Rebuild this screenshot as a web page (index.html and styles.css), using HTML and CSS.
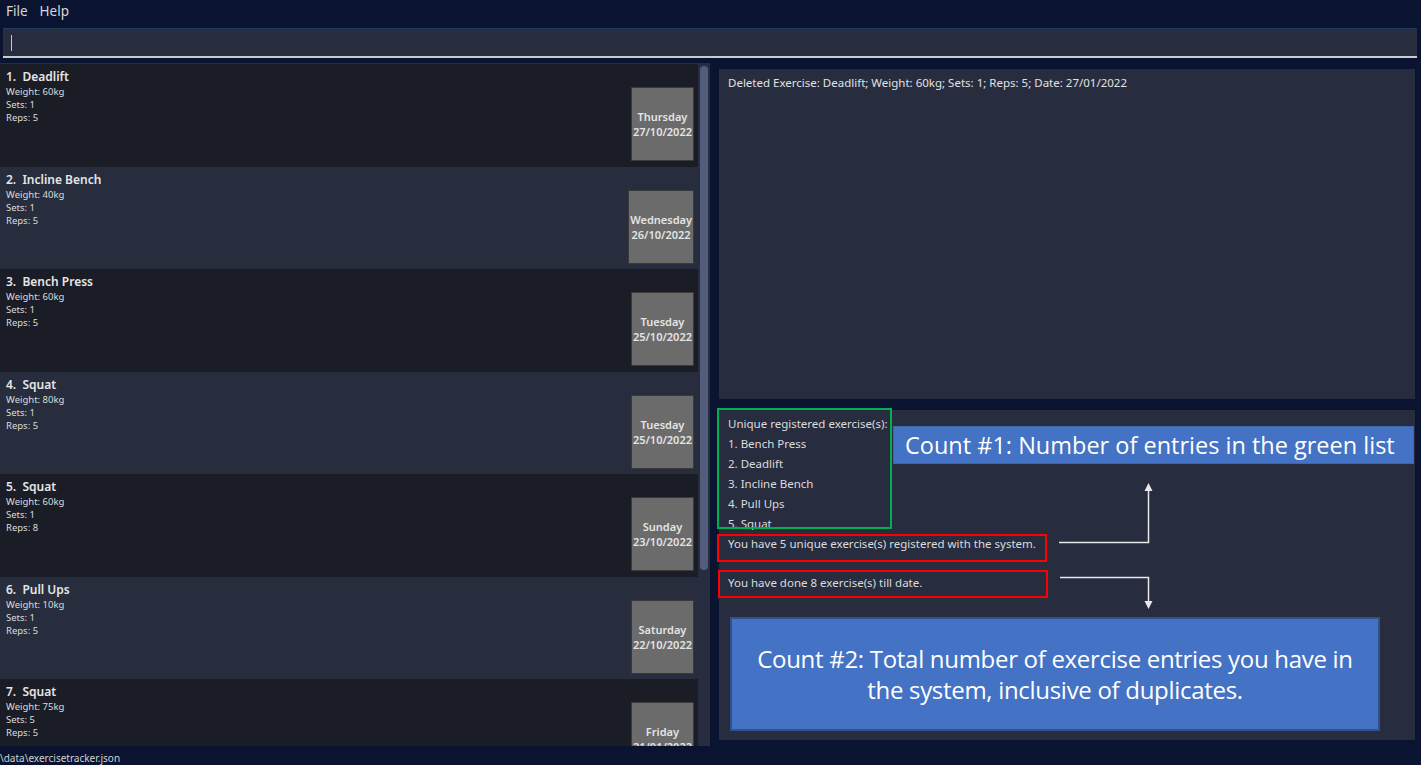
FILE: index.html
```html
<!DOCTYPE html>
<html>
<head>
<meta charset="utf-8">
<link rel="stylesheet" href="styles.css">
</head>
<body>
<div class="app">
  <div class="menubar"><span class="menu-item">File</span><span class="menu-item">Help</span></div>
  <div class="command"><span class="caret"></span></div>
  <div class="main">
    <div class="list-wrap">
      <div class="list">
        <div class="cell dark"><div class="info"><div class="title">1.&nbsp; Deadlift</div><div class="line">Weight: 60kg</div><div class="line">Sets: 1</div><div class="line">Reps: 5</div></div><div class="date"><span>Thursday</span><span>27/10/2022</span></div></div>
        <div class="cell light"><div class="info"><div class="title">2.&nbsp; Incline Bench</div><div class="line">Weight: 40kg</div><div class="line">Sets: 1</div><div class="line">Reps: 5</div></div><div class="date"><span>Wednesday</span><span>26/10/2022</span></div></div>
        <div class="cell dark"><div class="info"><div class="title">3.&nbsp; Bench Press</div><div class="line">Weight: 60kg</div><div class="line">Sets: 1</div><div class="line">Reps: 5</div></div><div class="date"><span>Tuesday</span><span>25/10/2022</span></div></div>
        <div class="cell light"><div class="info"><div class="title">4.&nbsp; Squat</div><div class="line">Weight: 80kg</div><div class="line">Sets: 1</div><div class="line">Reps: 5</div></div><div class="date"><span>Tuesday</span><span>25/10/2022</span></div></div>
        <div class="cell dark"><div class="info"><div class="title">5.&nbsp; Squat</div><div class="line">Weight: 60kg</div><div class="line">Sets: 1</div><div class="line">Reps: 8</div></div><div class="date"><span>Sunday</span><span>23/10/2022</span></div></div>
        <div class="cell light"><div class="info"><div class="title">6.&nbsp; Pull Ups</div><div class="line">Weight: 10kg</div><div class="line">Sets: 1</div><div class="line">Reps: 5</div></div><div class="date"><span>Saturday</span><span>22/10/2022</span></div></div>
        <div class="cell dark"><div class="info"><div class="title">7.&nbsp; Squat</div><div class="line">Weight: 75kg</div><div class="line">Sets: 5</div><div class="line">Reps: 5</div></div><div class="date"><span>Friday</span><span>21/01/2022</span></div></div>
      </div>
      <div class="scrollbar"><div class="thumb"></div></div>
    </div>
    <div class="right">
      <div class="result">Deleted Exercise: Deadlift; Weight: 60kg; Sets: 1; Reps: 5; Date: 27/01/2022</div>
      <div class="stats">
        <div class="unique">
          <div class="sline">Unique registered exercise(s):</div>
          <div class="sline">1. Bench Press</div>
          <div class="sline">2. Deadlift</div>
          <div class="sline">3. Incline Bench</div>
          <div class="sline">4. Pull Ups</div>
          <div class="sline">5. Squat</div>
        </div>
        <div class="sline count1">You have 5 unique exercise(s) registered with the system.</div>
        <div class="sline count2">You have done 8 exercise(s) till date.</div>
      </div>
    </div>
  </div>
  <div class="status">\data\exercisetracker.json</div>

  <div class="box green"></div>
  <div class="box red red1"></div>
  <div class="box red red2"></div>
  <div class="callout callout1">Count #1: Number of entries in the green list</div>
  <div class="callout callout2">Count #2: Total number of exercise entries you have in the system, inclusive of duplicates.</div>
  <svg class="arrows" width="1421" height="765" viewBox="0 0 1421 765">
    <polyline points="1059,542.5 1148.5,542.5 1148.5,490" fill="none" stroke="#e8e8e8" stroke-width="1.5"/>
    <polygon points="1148.5,483 1144.5,491 1152.5,491" fill="#e8e8e8"/>
    <polyline points="1060,577.5 1148.5,577.5 1148.5,602" fill="none" stroke="#e8e8e8" stroke-width="1.5"/>
    <polygon points="1148.5,609 1144.5,601 1152.5,601" fill="#e8e8e8"/>
  </svg>
</div>
</body>
</html>
```

FILE: styles.css
```css
html, body {
  margin: 0;
  padding: 0;
  background: #0a1431;
}
.app {
  position: relative;
  width: 1421px;
  height: 765px;
  overflow: hidden;
  font-family: "Noto Sans", "Open Sans", sans-serif;
  color: #e2e2e2;
}
.menubar {
  height: 22px;
  display: flex;
  align-items: center;
  gap: 12px;
  padding-left: 6px;
  font-size: 13.5px;
  color: #d8d8d8;
}
.command {
  margin: 6px 4px 0 3px;
  height: 27px;
  background: #272d3f;
  border-top: 1px solid #1f3b5e;
  border-bottom: 2px solid #c9cbd3;
  display: flex;
  align-items: center;
  padding-left: 8px;
}
.caret {
  width: 1px;
  height: 16px;
  background: #c8c8c8;
}
.main {
  display: flex;
  margin-top: 5px;
  height: 683px;
}
.list-wrap {
  width: 710px;
  display: flex;
  background: #272d3f;
}
.list {
  width: 698px;
  padding-top: 1px;
  overflow: hidden;
}
.cell {
  height: 102.5px;
  display: flex;
  justify-content: space-between;
  box-sizing: border-box;
  padding: 0 4px 0 6px;
}
.cell.dark { background: #1b1d26; }
.cell.light { background: #272d3d; }
.info {
  padding-top: 5px;
}
.title {
  font-size: 12px;
  font-weight: 600;
  line-height: 16px;
  color: #e6e6e6;
}
.line {
  font-size: 9.5px;
  line-height: 13px;
  color: #dcdcdc;
}
.date {
  margin-top: 23px;
  height: 74px;
  min-width: 62px;
  padding: 0 1px;
  box-sizing: border-box;
  background: #6b6b6b;
  border: 1px solid #3a3a3a;
  display: flex;
  flex-direction: column;
  justify-content: center;
  align-items: center;
  font-size: 11px;
  font-weight: 600;
  line-height: 15px;
  color: #e4e4e4;
}
.scrollbar {
  width: 12px;
  padding: 3px 2px;
  box-sizing: border-box;
}
.thumb {
  height: 504px;
  background: #525d7b;
  border-radius: 4px;
}
.right {
  margin-left: 9px;
  width: 696px;
  display: flex;
  flex-direction: column;
  gap: 11px;
  padding-top: 6px;
}
.result {
  height: 330px;
  background: #272d3f;
  box-sizing: border-box;
  padding: 6px 9px;
  font-size: 11.5px;
  line-height: 16px;
}
.stats {
  height: 330px;
  background: #272d3f;
  box-sizing: border-box;
  padding: 4px 9px;
}
.unique {
  height: 116px;
  overflow: hidden;
}
.sline {
  font-size: 11.5px;
  line-height: 20px;
  color: #dcdcdc;
}
.count1 { margin-top: 4px; }
.count2 { margin-top: 19px; }
.status {
  height: 19px;
  font-size: 10px;
  line-height: 24px;
  color: #d0d0d0;
  padding-left: 0;
}
.box {
  position: absolute;
  box-sizing: border-box;
  border: 2px solid;
}
.green { left: 717px; top: 408px; width: 175px; height: 121px; border-color: #00b050; }
.red { border-color: #ff0000; }
.red1 { left: 717px; top: 534px; width: 330px; height: 28px; }
.red2 { left: 718px; top: 570px; width: 330px; height: 28px; }
.callout {
  position: absolute;
  box-sizing: border-box;
  background: #4472c4;
  color: #ffffff;
  font-family: "Open Sans", "Noto Sans", sans-serif;
}
.callout1 {
  left: 893px; top: 426px; width: 521px; height: 38px;
  border: 1px solid #3f65ad;
  font-size: 23.5px;
  line-height: 36px;
  padding-left: 11px;
  white-space: nowrap;
}
.callout2 {
  left: 730px; top: 617px; width: 650px; height: 114px;
  border: 2px solid #2f528f;
  font-size: 24px;
  line-height: 31px;
  display: flex;
  align-items: center;
  justify-content: center;
  text-align: center;
  padding: 0 20px;
  letter-spacing: -0.3px;
}
.arrows {
  position: absolute;
  left: 0;
  top: 0;
  pointer-events: none;
}
```
